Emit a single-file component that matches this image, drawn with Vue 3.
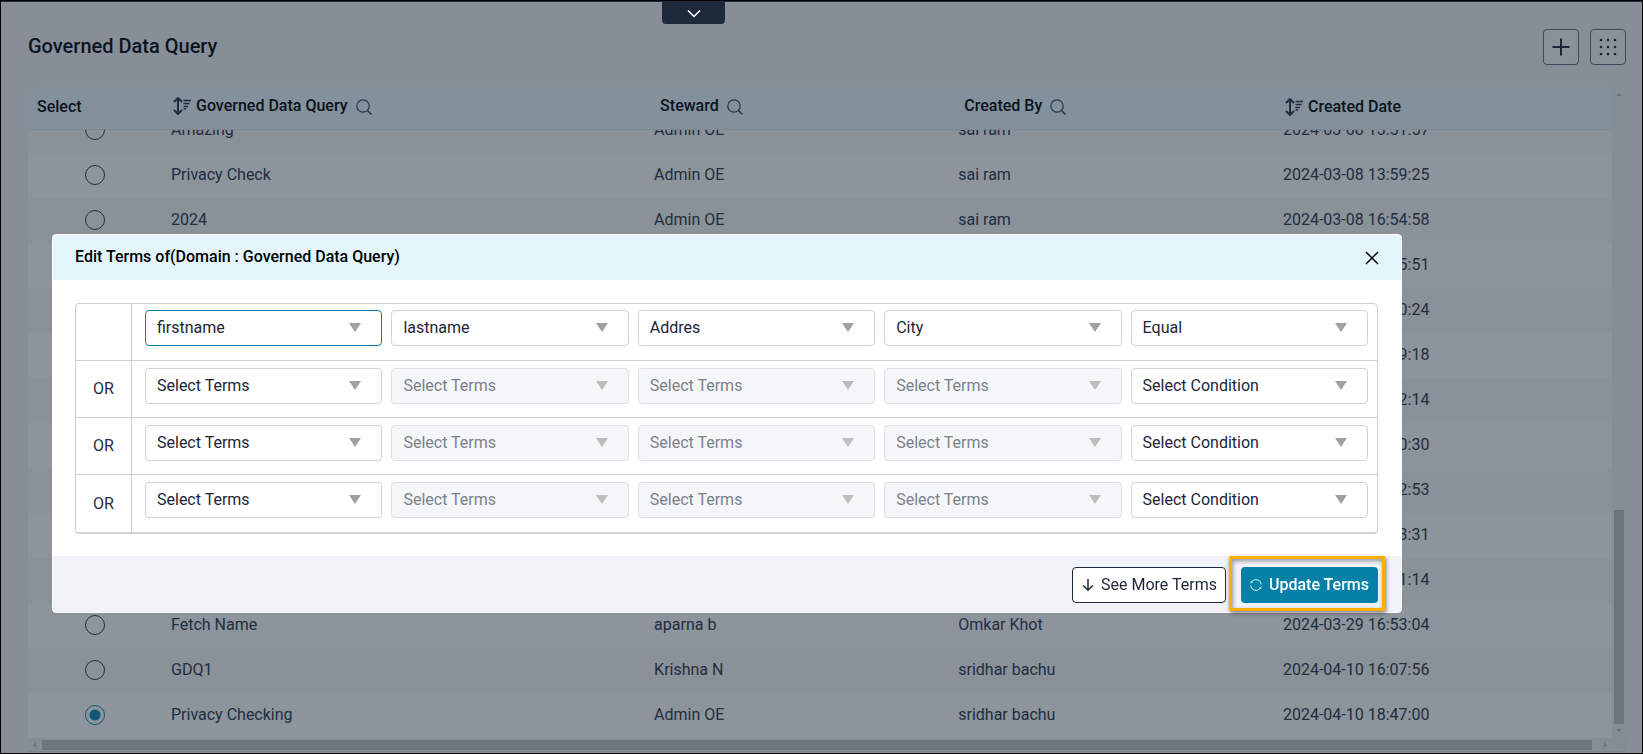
<script setup>
import { onMounted, ref } from 'vue'

const scroller = ref(null)
const selected = ref(13)

const queries = [
  ['Amazing', 'Admin OE', 'sai ram', '2024-03-08 13:51:57'],
  ['Privacy Check', 'Admin OE', 'sai ram', '2024-03-08 13:59:25'],
  ['2024', 'Admin OE', 'sai ram', '2024-03-08 16:54:58'],
  ['', '', '', '2024-03-11 10:35:51'],
  ['', '', '', '2024-03-11 11:20:24'],
  ['', '', '', '2024-03-12 12:49:18'],
  ['', '', '', '2024-03-13 15:42:14'],
  ['', '', '', '2024-03-14 16:10:30'],
  ['', '', '', '2024-03-15 17:02:53'],
  ['', '', '', '2024-03-18 12:43:31'],
  ['', '', '', '2024-03-20 14:21:14'],
  ['Fetch Name', 'aparna b', 'Omkar Khot', '2024-03-29 16:53:04'],
  ['GDQ1', 'Krishna N', 'sridhar bachu', '2024-04-10 16:07:56'],
  ['Privacy Checking', 'Admin OE', 'sridhar bachu', '2024-04-10 18:47:00'],
]

const columns = [
  { label: 'Governed Data Query', sort: true, search: true },
  { label: 'Steward', search: true },
  { label: 'Created By', search: true },
  { label: 'Created Date', sort: true },
]

const blank = ['Select Terms', 'Select Terms', 'Select Terms', 'Select Terms', 'Select Condition']
const termRows = [
  { joiner: '', values: ['firstname', 'lastname', 'Addres', 'City', 'Equal'] },
  { joiner: 'OR', values: blank },
  { joiner: 'OR', values: blank },
  { joiner: 'OR', values: blank },
]

const isDisabled = (row, i) => row.joiner !== '' && i > 0 && i < 4

onMounted(() => {
  scroller.value.scrollTop = scroller.value.scrollHeight
})
</script>

<template>
  <div class="page">
    <button class="pull-tab" aria-label="Show menu">
      <svg width="14" height="9" viewBox="0 0 14 9"><path d="M1 1.500 7 7.500l6-6" fill="none" stroke="#fff" stroke-width="1.500" /></svg>
    </button>

    <header class="topbar">
      <h1>Governed Data Query</h1>
      <div class="tools">
        <button class="tool" aria-label="Add">
          <svg width="18" height="18" viewBox="0 0 18 18"><path d="M9 .5v17M.5 9h17" stroke="#1a2536" stroke-width="2" /></svg>
        </button>
        <button class="tool" aria-label="Options">
          <svg width="18" height="18" viewBox="0 0 18 18" fill="#1a2536">
            <template v-for="y in 3" :key="y">
              <circle v-for="x in 3" :key="x" :cx="x * 7 - 5" :cy="y * 7 - 5" r="1.300" />
            </template>
          </svg>
        </button>
      </div>
    </header>

    <main class="grid">
      <div ref="scroller" class="scroller">
        <table class="queries">
          <colgroup>
            <col class="c-select" /><col class="c-name" /><col class="c-steward" /><col class="c-by" /><col />
          </colgroup>
          <thead>
            <tr>
              <th class="first">Select</th>
              <th v-for="c in columns" :key="c.label">
                <div class="head" :class="{ sorted: c.sort }">
                  <svg v-if="c.sort" width="18" height="18" viewBox="0 0 18 18" fill="none" stroke="#1e2c3f">
                    <path d="M5 1.500v15M1 5l4-4 4 4M1 13l4 4 4-4" stroke-width="2" />
                    <path d="M10.500 3.500H18M10.500 6.500H16.500M10.500 9.500H15M10.500 12H13" stroke-width="1.600" />
                  </svg>
                  <span>{{ c.label }}</span>
                  <svg v-if="c.search" class="search" width="16" height="16" viewBox="0 0 16 16" fill="none" stroke="#26364a">
                    <circle cx="7" cy="7" r="6.200" stroke-width="1.200" /><path d="m11.500 11.500 4 4" stroke-width="1.500" />
                  </svg>
                </div>
              </th>
            </tr>
          </thead>
          <tbody>
            <tr v-for="(q, i) in queries" :key="i">
              <td class="pick"><input v-model="selected" type="radio" name="query" :value="i" :aria-label="q[0] || q[3]" /></td>
              <td v-for="(cell, j) in q" :key="j">{{ cell }}</td>
            </tr>
          </tbody>
        </table>
      </div>
      <div class="vbar">
        <svg class="arrow" viewBox="0 0 14 14"><path d="M4 9l3-3 3 3z" /></svg>
        <div class="vspace"></div>
        <div class="vthumb"></div>
        <svg class="arrow" viewBox="0 0 14 14"><path d="M4 5l3 3 3-3z" /></svg>
      </div>
      <div class="hbar">
        <svg class="arrow" viewBox="0 0 14 14"><path d="M8 4L5 7l3 3z" /></svg>
        <div class="hthumb"></div>
        <svg class="arrow" viewBox="0 0 14 14"><path d="M6 4l3 3-3 3z" /></svg>
      </div>
      <div class="corner"></div>
    </main>

    <div class="overlay">
      <section class="modal" role="dialog" aria-labelledby="modal-title">
        <header class="modal-head">
          <h2 id="modal-title">Edit Terms of(Domain : Governed Data Query)</h2>
          <button class="close" aria-label="Close">
            <svg width="14" height="14" viewBox="0 0 14 14"><path d="m1 1 12 12M13 1 1 13" stroke="#000" stroke-width="1.500" /></svg>
          </button>
        </header>

        <div class="modal-body">
          <div class="terms">
            <div v-for="(row, r) in termRows" :key="r" class="term-row">
              <div class="joiner">{{ row.joiner }}</div>
              <div class="fields">
                <div v-for="(v, i) in row.values" :key="i" class="field" :class="{ off: isDisabled(row, i), active: r === 0 && i === 0 }">
                  <select :disabled="isDisabled(row, i)" :aria-label="(i < 4 ? 'Term ' : 'Condition ') + (r + 1)">
                    <option>{{ v }}</option>
                  </select>
                  <svg class="caret" width="12" height="9" viewBox="0 0 12 9"><path d="M0 0h12L6 9z" fill="#a0a0a0" /></svg>
                </div>
              </div>
            </div>
          </div>
        </div>

        <footer class="modal-foot">
          <button class="btn more">
            <svg width="12" height="14" viewBox="0 0 12 14" fill="none" stroke="#1d2939" stroke-width="1.500"><path d="M6 1v11.500M1.200 7.500 6 12.300l4.800-4.800" /></svg>
            See More Terms
          </button>
          <div class="callout">
            <button class="btn update">
              <svg width="12" height="12" viewBox="0 0 12 12" fill="none" stroke="#d9f0f6" stroke-width="1">
                <path d="M2.200 2.200A5.300 5.300 0 0 1 11.300 5.500M9.800 9.800A5.300 5.300 0 0 1 .7 6.500M.8 4.500 1.200 2.600l1.700.6M11.200 7.500l-.4 1.900-1.700-.6" />
              </svg>
              Update Terms
            </button>
          </div>
        </footer>
      </section>
    </div>
  </div>
</template>

<style>
body {
  background: #878e98;
}
</style>

<style scoped>
* {
  box-sizing: border-box;
}

.page {
  position: relative;
  display: flex;
  flex-direction: column;
  height: 100vh;
  padding: 0 16px 0 27px;
  border: 1px solid #000;
  background: #878e98;
  box-shadow: inset 0 1px #1e2b3e;
  font: 400 16px/20px Roboto, "Liberation Sans", sans-serif;
  color: #222d3f;
  overflow: hidden;
}

button,
select {
  font: inherit;
}

.pull-tab {
  position: absolute;
  top: 0;
  left: 661px;
  display: flex;
  align-items: center;
  justify-content: center;
  width: 63px;
  height: 23px;
  padding: 2px 0 0;
  border: 0;
  border-radius: 0 0 4px 4px;
  background: #1e2a3b;
}

.topbar {
  display: flex;
  align-items: flex-start;
  justify-content: space-between;
  height: 86px;
  padding-top: 28px;
}

h1 {
  margin: 0;
  font-size: 20px;
  line-height: 34px;
  font-weight: 500;
  color: #0d141e;
}

.tools {
  display: flex;
  gap: 11px;
}

.tool {
  display: flex;
  align-items: center;
  justify-content: center;
  width: 36px;
  height: 36px;
  padding: 0;
  border: 1px solid #3c485c;
  border-radius: 4px;
  background: #8a9199;
}

.grid {
  flex: 1;
  min-height: 0;
  display: grid;
  grid-template: minmax(0, 1fr) 14px / minmax(0, 1fr) 14px;
  padding-bottom: 1px;
}

.scroller {
  overflow: auto;
  scrollbar-width: none;
  border-top-left-radius: 8px;
}

.queries {
  width: 100%;
  table-layout: fixed;
  border-collapse: separate;
  border-spacing: 0;
}

.c-select {
  width: 137px;
}

.c-name {
  width: 30.5%;
}

.c-steward {
  width: 19.2%;
}

.c-by {
  width: 20.5%;
}

th {
  position: sticky;
  top: 0;
  z-index: 1;
  height: 43px;
  padding: 0 0 4px 12px;
  border-bottom: 1px solid #7d8690;
  background: #82919b;
  font-weight: 500;
  text-align: left;
  color: #0c131c;
}

th:first-child,
th:last-child {
  padding-bottom: 2px;
}

th.first {
  padding-left: 9px;
}

.head {
  display: flex;
  align-items: center;
  gap: 5px;
}

.head.sorted {
  margin-left: -4px;
}

.search {
  margin: 2px 0 0 3px;
}

td {
  height: 45px;
  padding: 0 0 2px 6px;
  white-space: nowrap;
  background: #8a9198;
}

tbody tr:nth-child(even) td {
  background: #8d949b;
}

.pick {
  padding: 0 3px 2px 0;
  text-align: center;
}

.pick input {
  appearance: none;
  display: block;
  width: 20px;
  height: 20px;
  margin: 0 auto;
  border: 1px solid #222d41;
  border-radius: 50%;
}

.pick input:checked {
  border-color: #12587a;
  background: radial-gradient(circle, #0e5878 5px, transparent 6px);
}

.vbar {
  display: flex;
  flex-direction: column;
  align-items: center;
  background: #868d94;
}

.arrow {
  flex: none;
  width: 14px;
  height: 14px;
  fill: #6b727a;
}

.vspace {
  flex: 409;
}

.vthumb {
  flex: 214;
  width: 10px;
  background: #6d747c;
}

.hbar {
  display: flex;
  align-items: center;
  background: #868d94;
  border-bottom: 1px solid #7c848d;
}

.hthumb {
  flex: 1;
  height: 10px;
  margin-right: 6px;
  background: #6d747c;
}

.corner {
  background: #858c94;
  border-bottom: 1px solid #7c848d;
}

.overlay {
  position: absolute;
  inset: 0;
  z-index: 2;
  padding: 233px 240px 0 51px;
}

.modal {
  border: 1px solid #fff;
  border-radius: 4px;
  background: #fff;
}

.modal-head {
  display: flex;
  align-items: center;
  justify-content: space-between;
  height: 45px;
  padding: 0 22px;
  border-radius: 3px 3px 0 0;
  background: #e4f6fb;
}

h2 {
  margin: 0;
  padding-bottom: 2px;
  font-size: 16px;
  line-height: 20px;
  font-weight: 500;
  color: #000;
}

.close {
  display: flex;
  padding: 0;
  border: 0;
  background: none;
}

.modal-body {
  padding: 23px 23px 22px 22px;
}

.terms {
  border: 1px solid #cfcfcf;
  border-radius: 4px;
}

.term-row {
  display: flex;
  height: 57px;
  border-bottom: 1px solid #cfcfcf;
}

.term-row:last-child {
  height: 58px;
}

.joiner {
  display: flex;
  align-items: center;
  justify-content: center;
  width: 56px;
  border-right: 1px solid #cfcfcf;
}

.fields {
  flex: 1;
  display: grid;
  grid-template-columns: repeat(5, minmax(0, 1fr));
  gap: 9px;
  padding: 7px 9px 0 13px;
}

.term-row:first-child .fields {
  padding-top: 6px;
}

.field {
  position: relative;
  height: 36px;
}

.field select {
  appearance: none;
  width: 100%;
  height: 36px;
  padding: 0 36px 0 11px;
  border: 1px solid #cfd2dc;
  border-radius: 4px;
  background: #fff;
  color: #1d2538;
  opacity: 1;
}

.field.active select {
  border-color: #0880a6;
}

.field.off select {
  border-color: #dddfe6;
  background: #f5f6f8;
  color: #7b818c;
}

.caret {
  position: absolute;
  top: 13px;
  right: 21px;
  pointer-events: none;
}

.off .caret {
  opacity: 0.65;
}

.modal-foot {
  display: flex;
  align-items: flex-start;
  justify-content: flex-end;
  gap: 3px;
  height: 56px;
  padding-right: 16px;
  border-radius: 0 0 3px 3px;
  background: #f2f3f8;
}

.btn {
  display: flex;
  align-items: center;
  gap: 7px;
  height: 36px;
  border-radius: 4px;
  white-space: nowrap;
}

.more {
  margin-top: 11px;
  padding: 0 8px 0 9px;
  border: 1px solid #1d2939;
  background: #fff;
  color: #1d2538;
}

.update {
  padding: 0 9px;
  border: 0;
  background: #0580a6;
  color: #fff;
  font-weight: 500;
}

.callout {
  padding: 8px 4px 5px 9px;
  border: 3px solid #ffb000;
  box-shadow: 1px 2px 4px rgba(0, 0, 0, 0.5), inset 1px 2px 4px rgba(0, 0, 0, 0.4);
}
</style>
